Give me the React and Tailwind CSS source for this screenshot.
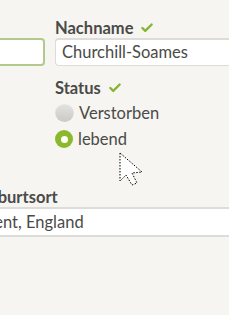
import { Check } from 'lucide-react'

function Label({ children, check, className = '' }) {
  return (
    <div className={`flex items-center gap-[7px] text-[16.5px] font-bold leading-[18px] text-[#4a4a48] ${className}`}>
      <span>{children}</span>
      {check && <Check className="h-[14px] w-[14px] text-[#86b530]" strokeWidth={4} />}
    </div>
  )
}

function Radio({ checked, children }) {
  return (
    <label className="flex items-center gap-[5px] text-[16.5px] leading-[18px] text-[#4a4a48]">
      {checked ? (
        <span className="flex h-[18px] w-[18px] items-center justify-center rounded-full bg-[#8cb92c]">
          <span className="h-[7px] w-[7px] rounded-full bg-white" />
        </span>
      ) : (
        <span className="h-[19px] w-[19px] rounded-full bg-gradient-to-b from-[#e4e4e1] to-[#c9c9c6] shadow-[inset_0_1px_1px_rgba(255,255,255,0.8)]" />
      )}
      <span>{children}</span>
    </label>
  )
}

export default function App() {
  return (
    <div className="relative h-[315px] w-[229px] overflow-hidden bg-[#f6f5f1] font-['Lato','Noto_Sans',sans-serif]">
      <div className="flex gap-[10px] pt-[19px]">
        {/* Vorname (abgeschnitten) */}
        <div className="w-[45px] shrink-0 pt-[19px]">
          <div className="h-[28px] rounded-r-[4px] border-2 border-l-0 border-[#b3c98a] bg-white" />
        </div>

        <div className="w-[220px] shrink-0">
          <Label check>Nachname</Label>
          <div className="mt-[1px] flex h-[28px] items-center rounded-l-[4px] border border-r-0 border-t-2 border-[#dcdcd8] bg-white pl-[6px] text-[16.5px] text-[#4a4a48]">
            Churchill-Soames
          </div>

          <Label check className="mt-[13px]">Status</Label>
          <div className="mt-[6px] flex flex-col gap-[8px]">
            <Radio>Verstorben</Radio>
            <Radio checked>lebend</Radio>
          </div>
        </div>
      </div>

      {/* Geburtsort */}
      <div className="-ml-[23px] mt-[40px] w-[270px]">
        <Label>Geburtsort</Label>
        <div className="mt-[1px] flex h-[30px] items-center border-y-2 border-[#dcdcd8] bg-white pl-[7px] text-[16.5px] text-[#4a4a48]">
          Kent, England
        </div>
      </div>

      {/* Mauszeiger */}
      <svg className="absolute left-[118px] top-[151px]" width="28" height="38" viewBox="0 0 28 38">
        <path
          d="M2 2 L2 30 L8 24 L14 34 L19 32 L14 22 L24 21 Z"
          fill="white"
          stroke="black"
          strokeWidth="1"
          strokeDasharray="1.5 1.5"
        />
      </svg>
    </div>
  )
}
